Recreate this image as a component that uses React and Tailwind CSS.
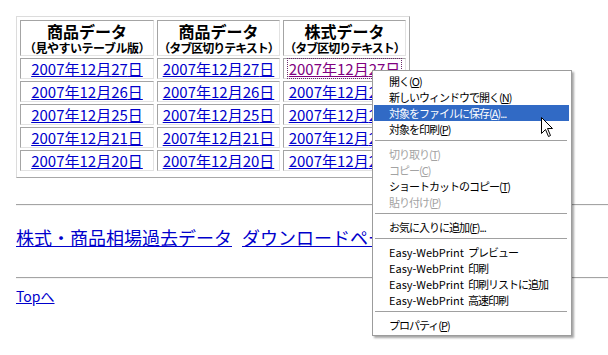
import React from 'react'

const DATES = ['27', '26', '25', '21', '20']

function Cell({ children, className = '' }) {
  return (
    <div
      className={`flex items-center justify-center border border-t-[#a4a4a4] border-l-[#a4a4a4] border-r-[#e2e2e2] border-b-[#e2e2e2] ${className}`}
    >
      {children}
    </div>
  )
}

function Header({ title, sub, tight }) {
  return (
    <Cell className="h-[36px] flex-col">
      <div className="text-[16px] leading-[18px] font-bold text-black">{title}</div>
      <div className={`text-[12px] leading-[15px] font-bold text-black whitespace-nowrap ${tight ? 'tracking-[-1px]' : 'tracking-[-0.5px]'}`}>
        {sub}
      </div>
    </Cell>
  )
}

function DateLink({ d, visited }) {
  return (
    <a
      href="#"
      className={`text-[15px] leading-[17px] underline ${
        visited ? 'text-[#800080] outline-1 outline-dotted outline-[#6b2a6b] outline-offset-1' : 'text-[#0000cc]'
      }`}
    >
      2007年12月{d}日
    </a>
  )
}

function MenuItem({ label, latin, k, tail = '', disabled, active }) {
  return (
    <div
      className={`h-4 flex items-center pl-[15px] text-[11px] leading-[13px] whitespace-nowrap ${
        active ? 'bg-[#316ac5] text-white' : disabled ? 'text-[#a3a3a3]' : 'text-black'
      }`}
    >
      {latin && <span className="mr-[4px]">{latin}</span>}
      <span className="tracking-[-1px]">
        {label}
        {k && (
          <>
            (<span className="underline">{k}</span>)
          </>
        )}
        {tail}
      </span>
    </div>
  )
}

function Sep() {
  return (
    <div className="h-[9px] pt-[3px] pl-[1px] pr-[2px]">
      <div className="border-t border-[#a0a0a0]" />
    </div>
  )
}

function ContextMenu() {
  return (
    <div className="absolute left-[372px] top-[70px] w-[200px] h-[266px] bg-white border border-[#9c9c9c] shadow-[2px_2px_2px_rgba(0,0,0,0.35)] pt-[2px] pb-[2px] pl-[1px] pr-[2px]">
      <MenuItem label="開く" k="O" />
      <MenuItem label="新しいウィンドウで開く" k="N" />
      <MenuItem label="対象をファイルに保存" k="A" tail="..." active />
      <MenuItem label="対象を印刷" k="P" />
      <Sep />
      <MenuItem label="切り取り" k="T" disabled />
      <MenuItem label="コピー" k="C" disabled />
      <MenuItem label="ショートカットのコピー" k="T" />
      <MenuItem label="貼り付け" k="P" disabled />
      <Sep />
      <MenuItem label="お気に入りに追加" k="F" tail="..." />
      <Sep />
      <MenuItem latin="Easy-WebPrint" label="プレビュー" />
      <MenuItem latin="Easy-WebPrint" label="印刷" />
      <MenuItem latin="Easy-WebPrint" label="印刷リストに追加" />
      <MenuItem latin="Easy-WebPrint" label="高速印刷" />
      <Sep />
      <MenuItem label="プロパティ" k="P" />
    </div>
  )
}

function Cursor() {
  return (
    <svg className="absolute left-[541px] top-[117px]" width="13" height="21" viewBox="0 0 13 21">
      <path
        d="M0.5 0.5 L0.5 16.5 L4.5 12.5 L7.5 19.5 L9.5 18.5 L6.5 11.5 L11.5 11.5 Z"
        fill="#fff"
        stroke="#000"
        strokeWidth="1"
      />
    </svg>
  )
}

export default function App() {
  return (
    <div className="relative w-[608px] h-[355px] overflow-hidden bg-white pl-4 pt-4 font-['Noto_Sans_CJK_JP',sans-serif]">
      {/* table */}
      <div className="w-[394px] h-[162px] border border-t-[#dcdcdc] border-l-[#dcdcdc] border-r-[#a8a8a8] border-b-[#a8a8a8] p-[3px]">
        <div className="flex flex-col gap-[2px]">
          <div className="grid grid-cols-[134px_123px_123px] gap-x-[3px]">
            <Header title="商品データ" sub="（見やすいテーブル版）" />
            <Header title="商品データ" sub="（タブ区切りテキスト）" tight />
            <Header title="株式データ" sub="（タブ区切りテキスト）" tight />
          </div>
          {DATES.map((d, i) => (
            <div key={d} className="grid grid-cols-[134px_123px_123px] gap-x-[3px]">
              <Cell className="h-[21px]"><DateLink d={d} /></Cell>
              <Cell className="h-[21px]"><DateLink d={d} /></Cell>
              <Cell className="h-[21px]"><DateLink d={d} visited={i === 0} /></Cell>
            </div>
          ))}
        </div>
      </div>

      <div className="mt-[26px] w-[620px] border-t border-[#a4a4a4] border-b border-b-[#f4f4f4]" />

      <div className="pt-[19px] pb-[27px] h-[71px]">
        <a href="#" className="text-[18px] leading-[24px] text-[#0000cc] underline whitespace-nowrap">
          株式・商品相場過去データ<span className="inline-block w-[10px]" />ダウンロードページ
        </a>
      </div>

      <div className="w-[620px] border-t border-[#a4a4a4] border-b border-b-[#f4f4f4]" />

      <div className="mt-[4px]">
        <a href="#" className="text-[14px] leading-[16px] text-[#0000cc] underline">Topへ</a>
      </div>

      <ContextMenu />
      <Cursor />
    </div>
  )
}
